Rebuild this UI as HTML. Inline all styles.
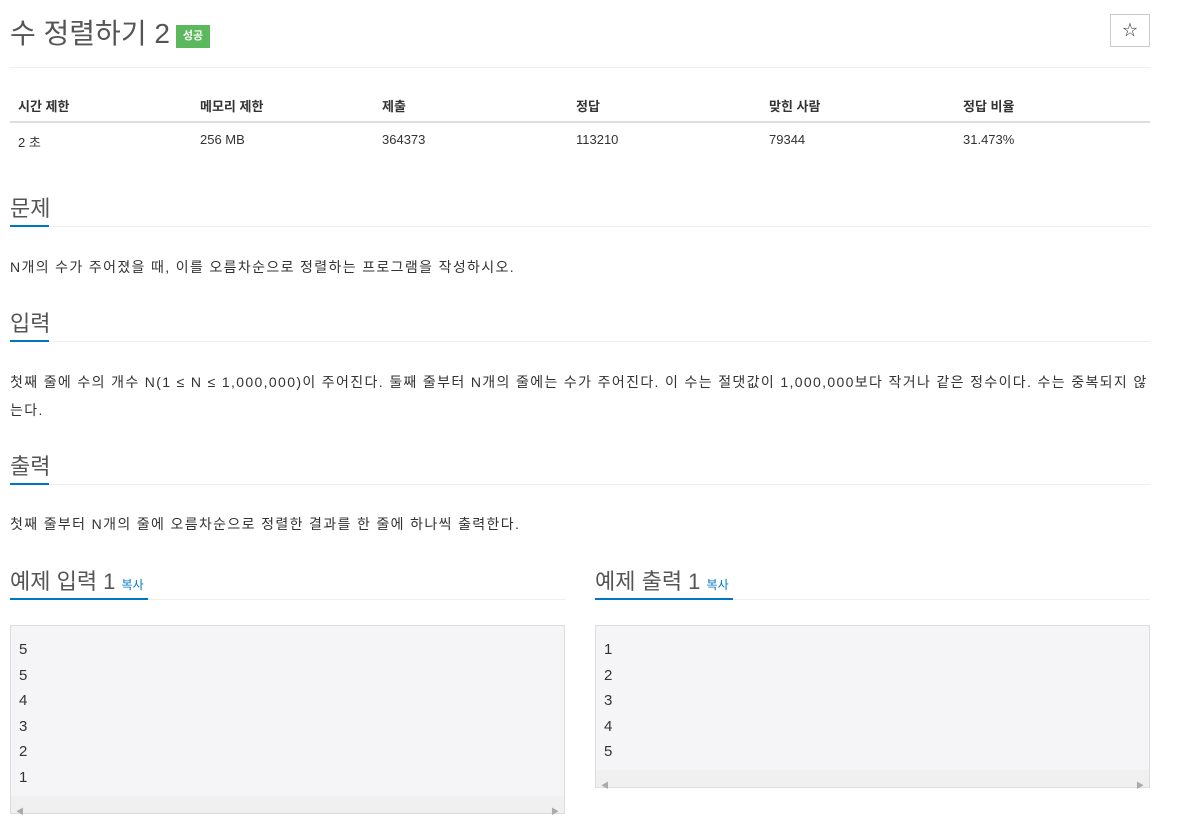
<!DOCTYPE html>
<html><head><meta charset="utf-8"><style>
*{margin:0;padding:0;box-sizing:border-box}
body{width:1200px;height:824px;background:#fff;font-family:"Liberation Sans","Noto Sans CJK KR",sans-serif;color:#333;position:relative;overflow:hidden}
.a{position:absolute;white-space:nowrap}
.h{font-size:22px;color:#555}
.ul{position:absolute;height:2px;background:#0076c0}
.ln{position:absolute;height:1px;background:#eee}
.t{font-size:14px;color:#333;letter-spacing:1.35px}
.th{font-size:13px;font-weight:bold;color:#333}
.td{font-size:13px;color:#333}
.pre{position:absolute;background:#f5f5f7;border:1px solid #ddd;font-size:15px;line-height:25.6px;padding:11px 8px;color:#333}
.sb{position:absolute;left:0;right:0;bottom:0;height:17px;background:#f0f0f0;font-size:8px;color:#aaa}
</style></head><body>
<div class="a" style="left:10px;top:12px;font-size:28px;color:#555">수 정렬하기 2</div>
<div class="a" style="left:176px;top:25px;width:34px;height:23px;background:#5cb85c;color:#fff;font-size:11px;font-weight:bold;text-align:center;line-height:23px">성공</div>
<div class="a" style="left:1110px;top:14px;width:40px;height:33px;border:1px solid #ccc;text-align:center;line-height:31px;font-size:15px">☆</div>
<div class="ln" style="left:10px;top:67px;width:1140px"></div>

<div class="a th" style="left:18px;top:96px">시간 제한</div>
<div class="a th" style="left:200px;top:96px">메모리 제한</div>
<div class="a th" style="left:382px;top:96px">제출</div>
<div class="a th" style="left:576px;top:96px">정답</div>
<div class="a th" style="left:769px;top:96px">맞힌 사람</div>
<div class="a th" style="left:963px;top:96px">정답 비율</div>
<div class="a" style="left:10px;top:121px;width:1140px;height:2px;background:#ddd"></div>
<div class="a td" style="left:18px;top:132px">2 초</div>
<div class="a td" style="left:200px;top:132px">256 MB</div>
<div class="a td" style="left:382px;top:132px">364373</div>
<div class="a td" style="left:576px;top:132px">113210</div>
<div class="a td" style="left:769px;top:132px">79344</div>
<div class="a td" style="left:963px;top:132px">31.473%</div>

<div class="a h" style="left:10px;top:191px">문제</div>
<div class="ln" style="left:10px;top:226px;width:1140px"></div>
<div class="ul" style="left:10px;top:225px;width:39px"></div>
<div class="a t" style="left:10px;top:257px">N개의 수가 주어졌을 때, 이를 오름차순으로 정렬하는 프로그램을 작성하시오.</div>

<div class="a h" style="left:10px;top:306px">입력</div>
<div class="ln" style="left:10px;top:341px;width:1140px"></div>
<div class="ul" style="left:10px;top:340px;width:39px"></div>
<div class="a t" style="left:10px;top:372px">첫째 줄에 수의 개수 N(1 ≤ N ≤ 1,000,000)이 주어진다. 둘째 줄부터 N개의 줄에는 수가 주어진다. 이 수는 절댓값이 1,000,000보다 작거나 같은 정수이다. 수는 중복되지 않</div>
<div class="a t" style="left:10px;top:400px">는다.</div>

<div class="a h" style="left:10px;top:449px">출력</div>
<div class="ln" style="left:10px;top:484px;width:1140px"></div>
<div class="ul" style="left:10px;top:483px;width:39px"></div>
<div class="a t" style="left:10px;top:514px">첫째 줄부터 N개의 줄에 오름차순으로 정렬한 결과를 한 줄에 하나씩 출력한다.</div>

<div class="a h" style="left:10px;top:564px">예제 입력 1 <span style="font-size:12px;color:#0076c0">복사</span></div>
<div class="ln" style="left:10px;top:599px;width:555px"></div>
<div class="ul" style="left:10px;top:598px;width:138px"></div>
<div class="a h" style="left:595px;top:564px">예제 출력 1 <span style="font-size:12px;color:#0076c0">복사</span></div>
<div class="ln" style="left:595px;top:599px;width:555px"></div>
<div class="ul" style="left:595px;top:598px;width:138px"></div>

<div class="pre" style="left:10px;top:625px;width:555px;height:189px">5<br>5<br>4<br>3<br>2<br>1<div class="sb"><span style="position:absolute;left:5px;top:3px">◀</span><span style="position:absolute;right:5px;top:3px">▶</span></div></div>
<div class="pre" style="left:595px;top:625px;width:555px;height:163px">1<br>2<br>3<br>4<br>5<div class="sb"><span style="position:absolute;left:5px;top:3px">◀</span><span style="position:absolute;right:5px;top:3px">▶</span></div></div>
</body></html>
